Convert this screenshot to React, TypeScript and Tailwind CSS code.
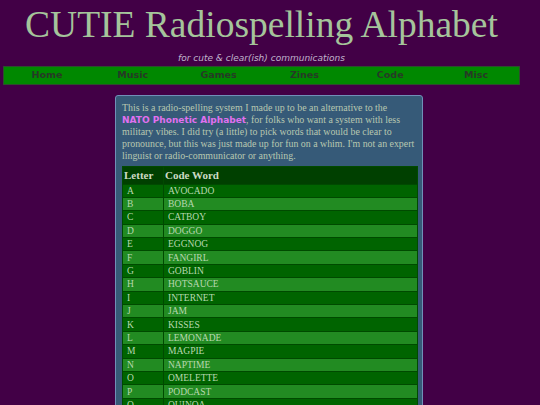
import React from "react";

const rows: [string, string][] = [
  ["A", "AVOCADO"],
  ["B", "BOBA"],
  ["C", "CATBOY"],
  ["D", "DOGGO"],
  ["E", "EGGNOG"],
  ["F", "FANGIRL"],
  ["G", "GOBLIN"],
  ["H", "HOTSAUCE"],
  ["I", "INTERNET"],
  ["J", "JAM"],
  ["K", "KISSES"],
  ["L", "LEMONADE"],
  ["M", "MAGPIE"],
  ["N", "NAPTIME"],
  ["O", "OMELETTE"],
  ["P", "PODCAST"],
  ["Q", "QUINOA"],
];

const nav = ["Home", "Music", "Games", "Zines", "Code", "Misc"];

export default function App() {
  return (
    <div className="min-h-[405px] w-[540px] bg-[#420046] overflow-hidden">
      <div className="w-[523px]">
        <h1 className="pt-[4px] text-center text-[37.5px] leading-[42px] text-[#a5c49b] font-['Liberation_Serif',serif]">
          CUTIE Radiospelling Alphabet
        </h1>
        <p className="mt-[7px] text-center text-[9px] leading-[11px] italic text-[#c0b4cc] font-['DejaVu_Sans',sans-serif]">
          for cute &amp; clear(ish) communications
        </p>
        <nav className="mx-[3px] mt-[2px] grid h-[19px] grid-cols-6 items-center border border-[#2d4d2d] bg-[#008800]">
          {nav.map((n) => (
            <span
              key={n}
              className="text-center text-[9.5px] font-bold text-[#263a26] font-['DejaVu_Sans',sans-serif]"
            >
              {n}
            </span>
          ))}
        </nav>
        <div className="ml-[115px] mt-[10px] w-[308px] rounded-[3px] border border-[#7090b8] bg-[#365a78] pl-[6px] pr-[5px] pt-[6px] pb-[4px]">
          <p className="whitespace-nowrap text-[9.9px] leading-[12px] text-[#b8c8b0] font-['Liberation_Serif',serif]">
            This is a radio-spelling system I made up to be an alternative to the
            <br />
            <a className="font-bold text-[#e070f0] font-['DejaVu_Sans',sans-serif] text-[9px]">
              NATO Phonetic Alphabet
            </a>
            , for folks who want a system with less
            <br />
            military vibes. I did try (a little) to pick words that would be clear to
            <br />
            pronounce, but this was just made up for fun on a whim. I'm not an expert
            <br />
            linguist or radio-communicator or anything.
          </p>
          <table className="mt-[4px] w-[296px] border-separate border-spacing-[1px] bg-[#004a00] font-['Liberation_Serif',serif] text-[9.5px]">
            <thead>
              <tr className="bg-[#004000]">
                <th className="h-[13px] w-[40px] pl-[1px] text-left text-[11px] font-bold text-[#cddbc5]">Letter</th>
                <th className="h-[13px] pl-[1px] text-left text-[11px] font-bold text-[#cddbc5]">Code Word</th>
              </tr>
            </thead>
            <tbody>
              {rows.map(([l, w], i) => (
                <tr key={l} className={i % 2 === 0 ? "bg-[#006400]" : "bg-[#228b22]"}>
                  <td className="h-[12.4px] pl-[4px] leading-[12px] text-[#b8d8b0]">{l}</td>
                  <td className="h-[12.4px] pl-[4px] leading-[12px] text-[#b8d8b0]">{w}</td>
                </tr>
              ))}
            </tbody>
          </table>
        </div>
      </div>
    </div>
  );
}
